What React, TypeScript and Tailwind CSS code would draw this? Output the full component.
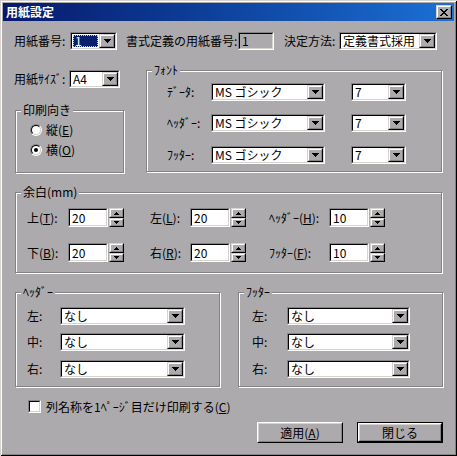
import React from "react";

type P = { className?: string; children?: React.ReactNode };

function Raised({ className = "", children }: P) {
  return (
    <div className={`border border-t-[#d6d3ce] border-l-[#d6d3ce] border-b-black border-r-black ${className}`}>
      <div className="w-full h-full border border-t-white border-l-white border-b-[#848284] border-r-[#848284] bg-[#adaaad] flex items-center justify-center">
        {children}
      </div>
    </div>
  );
}

function Sunken({ className = "", inner = "bg-white", children }: P & { inner?: string }) {
  return (
    <div className={`border border-t-[#848284] border-l-[#848284] border-b-white border-r-white ${className}`}>
      <div className={`w-full h-full border border-t-black border-l-black border-b-[#d6d3ce] border-r-[#d6d3ce] flex items-center ${inner}`}>
        {children}
      </div>
    </div>
  );
}

const Down = ({ s = 7 }: { s?: number }) => (
  <svg width={s} height={Math.ceil(s / 2)} viewBox={`0 0 ${s} ${Math.ceil(s / 2)}`} shapeRendering="crispEdges">
    <path d={`M0 0H${s}L${s / 2} ${Math.ceil(s / 2)}Z`} fill="#000" />
  </svg>
);
const Up = ({ s = 5 }: { s?: number }) => (
  <svg width={s} height={Math.ceil(s / 2)} viewBox={`0 0 ${s} ${Math.ceil(s / 2)}`} shapeRendering="crispEdges">
    <path d={`M0 ${Math.ceil(s / 2)}H${s}L${s / 2} 0Z`} fill="#000" />
  </svg>
);

function Combo({ w, text, selected }: { w: string; text: string; selected?: boolean }) {
  return (
    <Sunken className={`h-[18px] ${w}`}>
      {selected ? (
        <div className="flex-1 h-full p-[1px]">
          <div className="w-full h-full bg-[#0a1f6b] text-white border border-dotted border-[#d8d490] flex items-center pl-[1px] leading-[10px]">
            {text}
          </div>
        </div>
      ) : (
        <div className="flex-1 h-full flex items-center pl-[2px] whitespace-nowrap leading-[12px]">{text}</div>
      )}
      <Raised className="w-[16px] h-full">
        <Down />
      </Raised>
    </Sunken>
  );
}

function Spin() {
  return (
    <div className="w-[15px] h-[19px] ml-[1px] flex flex-col">
      <Raised className="w-full h-[10px]">
        <Up />
      </Raised>
      <Raised className="w-full h-[9px]">
        <Down s={5} />
      </Raised>
    </div>
  );
}

function Edit({ text }: { text: string }) {
  return (
    <Sunken className="w-[40px] h-[19px]">
      <span className="pl-[2px] leading-[12px]">{text}</span>
    </Sunken>
  );
}

function Group({ className = "", label, children }: P & { label: string }) {
  return (
    <div className={`relative border border-[#848284] shadow-[inset_1px_1px_0_#fff,1px_1px_0_#fff] ${className}`}>
      <span className="absolute -top-[8px] left-[5px] px-[2px] bg-[#adaaad] whitespace-nowrap">{label}</span>
      {children}
    </div>
  );
}

function Radio({ checked }: { checked?: boolean }) {
  return (
    <div className="w-[12px] h-[12px] rounded-full border border-t-[#848284] border-l-[#848284] border-b-white border-r-white">
      <div className="w-full h-full rounded-full border border-t-black border-l-black border-b-[#d6d3ce] border-r-[#d6d3ce] bg-white flex items-center justify-center">
        {checked && <div className="w-[4px] h-[4px] rounded-full bg-black" />}
      </div>
    </div>
  );
}

function Button({ children, def }: P & { def?: boolean }) {
  const core = (
    <div className="w-full h-full border border-t-white border-l-white border-b-black border-r-black">
      <div className="w-full h-full border border-t-[#d6d3ce] border-l-[#d6d3ce] border-b-[#848284] border-r-[#848284] flex items-center justify-center">
        {children}
      </div>
    </div>
  );
  return def ? <div className="w-[86px] h-[21px] border border-black">{core}</div> : <div className="w-[86px] h-[21px]">{core}</div>;
}

export default function App() {
  return (
    <div className="w-[457px] h-[456px] bg-[#adaaad] shadow-[inset_1px_1px_0_#d6d3ce,inset_-1px_-1px_0_#000,inset_2px_2px_0_#fff,inset_-2px_-2px_0_#848284] flex flex-col font-['Noto_Sans_CJK_JP',sans-serif] text-[12px] leading-[14px] text-black overflow-hidden">
      {/* Title bar */}
      <div className="mx-[3px] mt-[3px] h-[18px] bg-linear-to-r from-[#08186b] to-[#1c70d6] flex items-center pl-[3px] pr-[2px]">
        <span className="text-white font-bold flex-1">用紙設定</span>
        <Raised className="w-[16px] h-[14px]">
          <svg width="8" height="7" viewBox="0 0 8 7" shapeRendering="crispEdges">
            <path d="M0 0h2l2 2.5L6 0h2L5 3.5 8 7H6L4 4.5 2 7H0l3-3.5Z" fill="#000" />
          </svg>
        </Raised>
      </div>

      {/* Row 1 */}
      <div className="mt-[11px] h-[18px] flex items-center pl-[14px] whitespace-nowrap">
        <span className="w-[56px]">用紙番号:</span>
        <Combo w="w-[47px]" text="1" selected />
        <span className="ml-[9px] w-[112px]">書式定義の用紙番号:</span>
        <Sunken className="w-[36px] h-[18px]" inner="bg-[#adaaad]">
          <span className="pl-[2px] leading-[12px]">1</span>
        </Sunken>
        <span className="ml-[10px] w-[55px]">決定方法:</span>
        <Combo w="w-[98px]" text="定義書式採用" />
      </div>

      {/* Row 2 */}
      <div className="mt-[20px] flex pl-[14px] items-start">
        <div className="w-[110px] flex flex-col">
          <div className="h-[18px] flex items-center">
            <span className="w-[55px] whitespace-nowrap">用紙ｻｲｽﾞ:</span>
            <Combo w="w-[51px]" text="A4" />
          </div>
          <Group className="ml-[1px] mt-[22px] w-[109px] h-[63px]" label="印刷向き">
            <div className="pt-[12px] pl-[14px] flex flex-col gap-[6px]">
              <div className="h-[14px] flex items-center">
                <Radio />
                <span className="ml-[4px]">縦(<u>E</u>)</span>
              </div>
              <div className="h-[14px] flex items-center">
                <Radio checked />
                <span className="ml-[4px]">横(<u>O</u>)</span>
              </div>
            </div>
          </Group>
        </div>
        <Group className="ml-[22px] w-[296px] h-[102px]" label="ﾌｫﾝﾄ">
          <div className="pt-[12px] pl-[20px] flex flex-col">
            {["ﾃﾞｰﾀ:", "ﾍｯﾀﾞｰ:", "ﾌｯﾀｰ:"].map((l, i) => (
              <div key={l} className={`h-[18px] flex items-center ${i === 1 ? "mt-[13px]" : i === 2 ? "mt-[14px]" : ""}`}>
                <span className="w-[44px] whitespace-nowrap">{l}</span>
                <Combo w="w-[114px]" text="MS ゴシック" />
                <div className="ml-[26px]">
                  <Combo w="w-[55px]" text="7" />
                </div>
              </div>
            ))}
          </div>
        </Group>
      </div>

      {/* Margins */}
      <Group className="mt-[19px] ml-[15px] w-[427px] h-[81px]" label="余白(mm)">
        <div className="pt-[15px] pl-[11px] flex flex-col">
          <div className="h-[19px] flex items-center whitespace-nowrap">
            <span className="w-[41px]">上(<u>T</u>):</span>
            <Edit text="20" />
            <Spin />
            <span className="ml-[26px] w-[40px]">左(<u>L</u>):</span>
            <Edit text="20" />
            <Spin />
            <span className="ml-[23px] w-[60px]">ﾍｯﾀﾞｰ(<u>H</u>):</span>
            <Edit text="10" />
            <Spin />
          </div>
          <div className="mt-[16px] h-[19px] flex items-center whitespace-nowrap">
            <span className="w-[41px]">下(<u>B</u>):</span>
            <Edit text="20" />
            <Spin />
            <span className="ml-[26px] w-[40px]">右(<u>R</u>):</span>
            <Edit text="20" />
            <Spin />
            <span className="ml-[23px] w-[60px]">ﾌｯﾀｰ(<u>F</u>):</span>
            <Edit text="10" />
            <Spin />
          </div>
        </div>
      </Group>

      {/* Header / Footer */}
      <div className="mt-[19px] flex pl-[15px] gap-[18px]">
        <Group className="w-[205px] h-[95px]" label="ﾍｯﾀﾞｰ">
          <div className="pt-[14px] pl-[11px] flex flex-col">
            {["左:", "中:", "右:"].map((l, i) => (
              <div key={l} className={`h-[18px] flex items-center ${i === 1 ? "mt-[8px]" : i === 2 ? "mt-[9px]" : ""}`}>
                <span className="w-[33px]">{l}</span>
                <Combo w="w-[125px]" text="なし" />
              </div>
            ))}
          </div>
        </Group>
        <Group className="w-[205px] h-[95px]" label="ﾌｯﾀｰ">
          <div className="pt-[14px] pl-[13px] flex flex-col">
            {["左:", "中:", "右:"].map((l, i) => (
              <div key={l} className={`h-[18px] flex items-center ${i === 1 ? "mt-[8px]" : i === 2 ? "mt-[9px]" : ""}`}>
                <span className="w-[35px]">{l}</span>
                <Combo w="w-[123px]" text="なし" />
              </div>
            ))}
          </div>
        </Group>
      </div>

      {/* Checkbox */}
      <div className="mt-[13px] pl-[28px] h-[13px] flex items-center">
        <Sunken className="w-[13px] h-[13px]" />
        <span className="ml-[5px] whitespace-nowrap">列名称を1ﾍﾟｰｼﾞ目だけ印刷する(<u>C</u>)</span>
      </div>

      {/* Buttons */}
      <div className="mt-[9px] flex justify-end pr-[14px] gap-[14px]">
        <Button>
          適用(<u>A</u>)
        </Button>
        <Button def>閉じる</Button>
      </div>
    </div>
  );
}
